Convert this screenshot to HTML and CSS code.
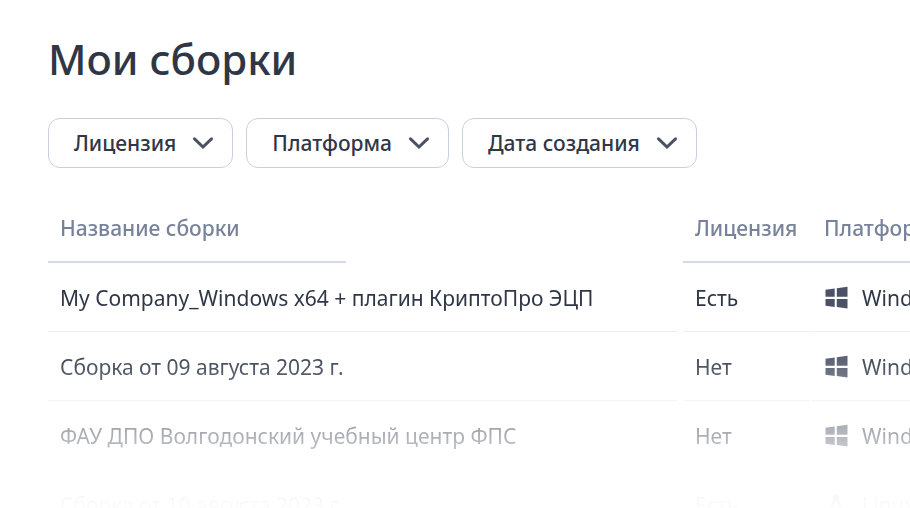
FILE: index.html
```html
<!DOCTYPE html>
<html lang="ru">
<head>
    <meta charset="UTF-8">
    <meta name="viewport" content="width=device-width, initial-scale=1.0">
    <title>Мои сборки</title>
    <link rel="stylesheet" href="styles.css">
</head>
<body>
    <!-- shared icons -->
    <svg class="sprite" aria-hidden="true">
        <symbol id="chevron" viewBox="0 0 22 14">
            <path d="M2.500 2.800 11 11 19.500 2.800" fill="none" stroke="currentColor" stroke-width="3" stroke-linecap="round"/>
        </symbol>
        <symbol id="windows" viewBox="0 0 24 24">
            <path d="M1.500 3.800 10.700 2.500V10.800H1.500zM12.800 2.200 23.500.8V10.800H12.800zM1.500 13h9.200v8L1.500 19.700zM12.800 13h10.700v9.500l-10.700-1.500z" fill="currentColor"/>
        </symbol>
        <symbol id="linux" viewBox="0 0 24 24">
            <path d="M12 1.500c-2.600 0-3.400 2-3.200 4.500.1 2.500-.8 3.500-2.300 6C5.300 14 4.500 16 4.500 19c0 2 1.500 3 3.500 3h8c2 0 3.500-1 3.500-3 0-3-.8-5-2-7-1.500-2.500-2.400-3.500-2.300-6 .2-2.500-.6-4.500-3.200-4.500zm0 6.500c1.500 3 4 6 4 11H8c0-5 2.500-8 4-11z" fill="currentColor"/>
        </symbol>
    </svg>

    <main class="page">
        <h1>Мои сборки</h1>

        <div class="filters">
            <button type="button" class="filter">Лицензия <svg class="chevron" aria-hidden="true"><use href="#chevron"/></svg></button>
            <button type="button" class="filter">Платформа <svg class="chevron" aria-hidden="true"><use href="#chevron"/></svg></button>
            <button type="button" class="filter">Дата создания <svg class="chevron" aria-hidden="true"><use href="#chevron"/></svg></button>
        </div>

        <div class="table-wrap">
            <table class="builds">
                <colgroup>
                    <col class="col-name">
                    <col class="col-license">
                    <col class="col-platform">
                </colgroup>
                <thead>
                    <tr>
                        <th scope="col">Название сборки</th>
                        <th scope="col">Лицензия</th>
                        <th scope="col">Платформа</th>
                    </tr>
                </thead>
                <tbody>
                    <tr>
                        <td>My Company_Windows x64 + плагин КриптоПро ЭЦП</td>
                        <td>Есть</td>
                        <td><span class="platform"><svg class="os" aria-hidden="true"><use href="#windows"/></svg>Windows</span></td>
                    </tr>
                    <tr>
                        <td>Сборка от 09 августа 2023 г.</td>
                        <td>Нет</td>
                        <td><span class="platform"><svg class="os" aria-hidden="true"><use href="#windows"/></svg>Windows</span></td>
                    </tr>
                    <tr>
                        <td>ФАУ ДПО Волгодонский учебный центр ФПС</td>
                        <td>Нет</td>
                        <td><span class="platform"><svg class="os" aria-hidden="true"><use href="#windows"/></svg>Windows</span></td>
                    </tr>
                    <tr>
                        <td>Сборка от 10 августа 2023 г.</td>
                        <td>Есть</td>
                        <td><span class="platform"><svg class="os" aria-hidden="true"><use href="#linux"/></svg>Linux</span></td>
                    </tr>
                </tbody>
            </table>
        </div>
    </main>
</body>
</html>
```

FILE: styles.css
```css
* {
    box-sizing: border-box;
}

body {
    margin: 0;
    background: #fff;
    color: #2f3747;
    font-family: "Noto Sans", "Open Sans", sans-serif;
    font-size: 21px;
    line-height: 28px;
}

.sprite {
    display: none;
}

.page {
    display: flex;
    flex-direction: column;
    height: 100vh;
    padding: 30px 0 0 48px;
    overflow: hidden;
}

h1 {
    margin: 0;
    font-size: 42px;
    font-weight: 500;
    line-height: 58px;
}

.filters {
    display: flex;
    gap: 13px;
    margin-top: 30px;
}

.filter {
    display: flex;
    align-items: center;
    gap: 16px;
    height: 50px;
    padding: 0 18px 0 25px;
    border: 1px solid #c8cfe0;
    border-radius: 12px;
    background: #fff;
    color: inherit;
    font: inherit;
    font-weight: 500;
    white-space: nowrap;
    cursor: pointer;
}

.filter:hover {
    background: #f6f7fb;
}

.chevron {
    width: 22px;
    height: 14px;
    color: #4b5266;
}

/* the list fades out towards the bottom of the window */
.table-wrap {
    flex: 1;
    min-height: 0;
    margin-top: 24px;
    overflow: hidden;
    -webkit-mask-image: linear-gradient(#000 48%, rgba(0, 0, 0, 0.38) 78%, rgba(0, 0, 0, 0.05) 94%, rgba(0, 0, 0, 0.02));
    mask-image: linear-gradient(#000 48%, rgba(0, 0, 0, 0.38) 78%, rgba(0, 0, 0, 0.05) 94%, rgba(0, 0, 0, 0.02));
}

.builds {
    width: 1100px;
    table-layout: fixed;
    border-spacing: 0;
}

.col-name {
    width: 635px;
}

.col-license {
    width: 129px;
}

.builds th,
.builds td {
    height: 69px;
    padding: 1px 12px 0;
    text-align: left;
    white-space: nowrap;
    background: linear-gradient(#ebedf6, #ebedf6) left bottom / calc(100% - 2px) 1px no-repeat;
}

.builds td:first-child {
    background-size: calc(100% - 5px) 1px;
}

.builds th {
    height: 71px;
    color: #78839b;
    font-weight: 500;
    background: linear-gradient(#d5dae9, #d5dae9) left bottom / 100% 2px no-repeat;
}

.builds th:first-child {
    background-size: 298px 2px;
}

.platform {
    display: flex;
    align-items: center;
    gap: 14px;
}

.os {
    width: 24px;
    height: 24px;
    color: #4b5266;
}
```
